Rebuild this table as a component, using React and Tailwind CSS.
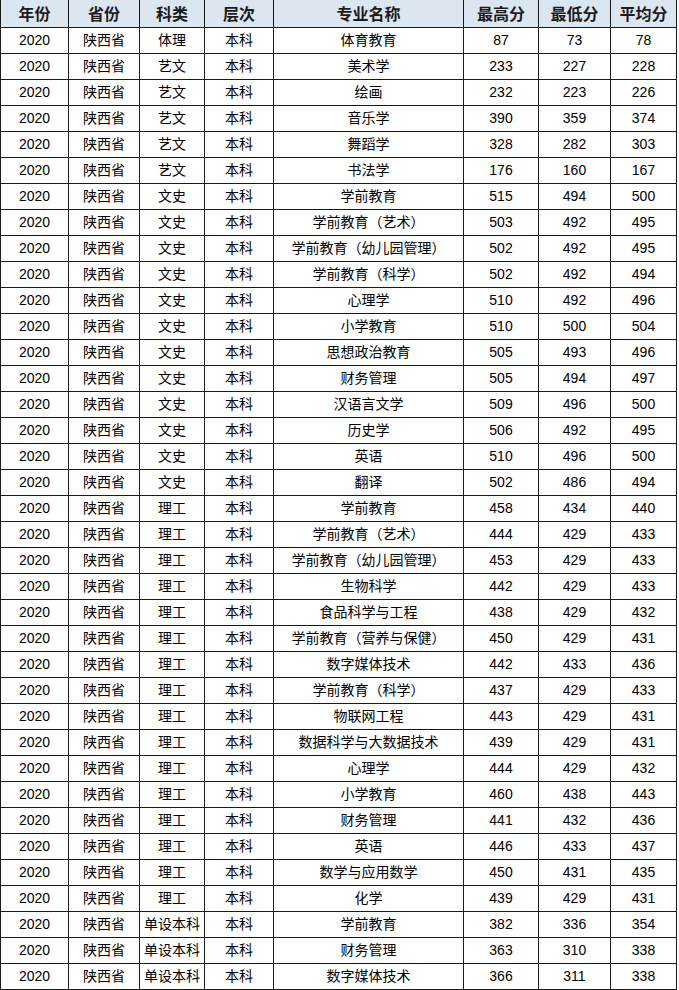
const rows = [
  ['体理', '体育教育', 87, 73, 78],
  ['艺文', '美术学', 233, 227, 228],
  ['艺文', '绘画', 232, 223, 226],
  ['艺文', '音乐学', 390, 359, 374],
  ['艺文', '舞蹈学', 328, 282, 303],
  ['艺文', '书法学', 176, 160, 167],
  ['文史', '学前教育', 515, 494, 500],
  ['文史', '学前教育（艺术）', 503, 492, 495],
  ['文史', '学前教育（幼儿园管理）', 502, 492, 495],
  ['文史', '学前教育（科学）', 502, 492, 494],
  ['文史', '心理学', 510, 492, 496],
  ['文史', '小学教育', 510, 500, 504],
  ['文史', '思想政治教育', 505, 493, 496],
  ['文史', '财务管理', 505, 494, 497],
  ['文史', '汉语言文学', 509, 496, 500],
  ['文史', '历史学', 506, 492, 495],
  ['文史', '英语', 510, 496, 500],
  ['文史', '翻译', 502, 486, 494],
  ['理工', '学前教育', 458, 434, 440],
  ['理工', '学前教育（艺术）', 444, 429, 433],
  ['理工', '学前教育（幼儿园管理）', 453, 429, 433],
  ['理工', '生物科学', 442, 429, 433],
  ['理工', '食品科学与工程', 438, 429, 432],
  ['理工', '学前教育（营养与保健）', 450, 429, 431],
  ['理工', '数字媒体技术', 442, 433, 436],
  ['理工', '学前教育（科学）', 437, 429, 433],
  ['理工', '物联网工程', 443, 429, 431],
  ['理工', '数据科学与大数据技术', 439, 429, 431],
  ['理工', '心理学', 444, 429, 432],
  ['理工', '小学教育', 460, 438, 443],
  ['理工', '财务管理', 441, 432, 436],
  ['理工', '英语', 446, 433, 437],
  ['理工', '数学与应用数学', 450, 431, 435],
  ['理工', '化学', 439, 429, 431],
  ['单设本科', '学前教育', 382, 336, 354],
  ['单设本科', '财务管理', 363, 310, 338],
  ['单设本科', '数字媒体技术', 366, 311, 338],
];

const headers = ['年份', '省份', '科类', '层次', '专业名称', '最高分', '最低分', '平均分'];
const widths = ['w-[68px]', 'w-[71px]', 'w-[65px]', 'w-[69px]', 'w-[190px]', 'w-[75px]', 'w-[72px]', 'w-[66px]'];

export default function App() {
  return (
    <div className="w-[679px] h-[990px] bg-white overflow-hidden font-['Liberation_Sans','Noto_Sans_CJK_SC',sans-serif] text-black">
      <table className="border-collapse table-fixed w-[677px]">
        <colgroup>
          {widths.map((w, i) => (
            <col key={i} className={w} />
          ))}
        </colgroup>
        <thead>
          <tr className="h-[27px] bg-[#dce6f1]">
            {headers.map((h) => (
              <th key={h} className="border border-[#1a1a1a] border-t-0 p-0 text-center text-[16px] font-bold text-[#1c1c1c] leading-none font-['Noto_Sans_CJK_SC',sans-serif]">
                {h}
              </th>
            ))}
          </tr>
        </thead>
        <tbody>
          {rows.map((r, i) => (
            <tr key={i} className="h-[26px]">
              <td className="border border-[#1a1a1a] p-0 text-center text-[14px] leading-none">2020</td>
              <td className="border border-[#1a1a1a] p-0 text-center text-[14px] leading-none">陕西省</td>
              <td className="border border-[#1a1a1a] p-0 text-center text-[14px] leading-none whitespace-nowrap">{r[0]}</td>
              <td className="border border-[#1a1a1a] p-0 text-center text-[14px] leading-none">本科</td>
              <td className="border border-[#1a1a1a] p-0 text-center text-[14px] leading-none whitespace-nowrap">{r[1]}</td>
              <td className="border border-[#1a1a1a] p-0 text-center text-[14px] leading-none">{r[2]}</td>
              <td className="border border-[#1a1a1a] p-0 text-center text-[14px] leading-none">{r[3]}</td>
              <td className="border border-[#1a1a1a] p-0 text-center text-[14px] leading-none">{r[4]}</td>
            </tr>
          ))}
        </tbody>
      </table>
    </div>
  );
}
